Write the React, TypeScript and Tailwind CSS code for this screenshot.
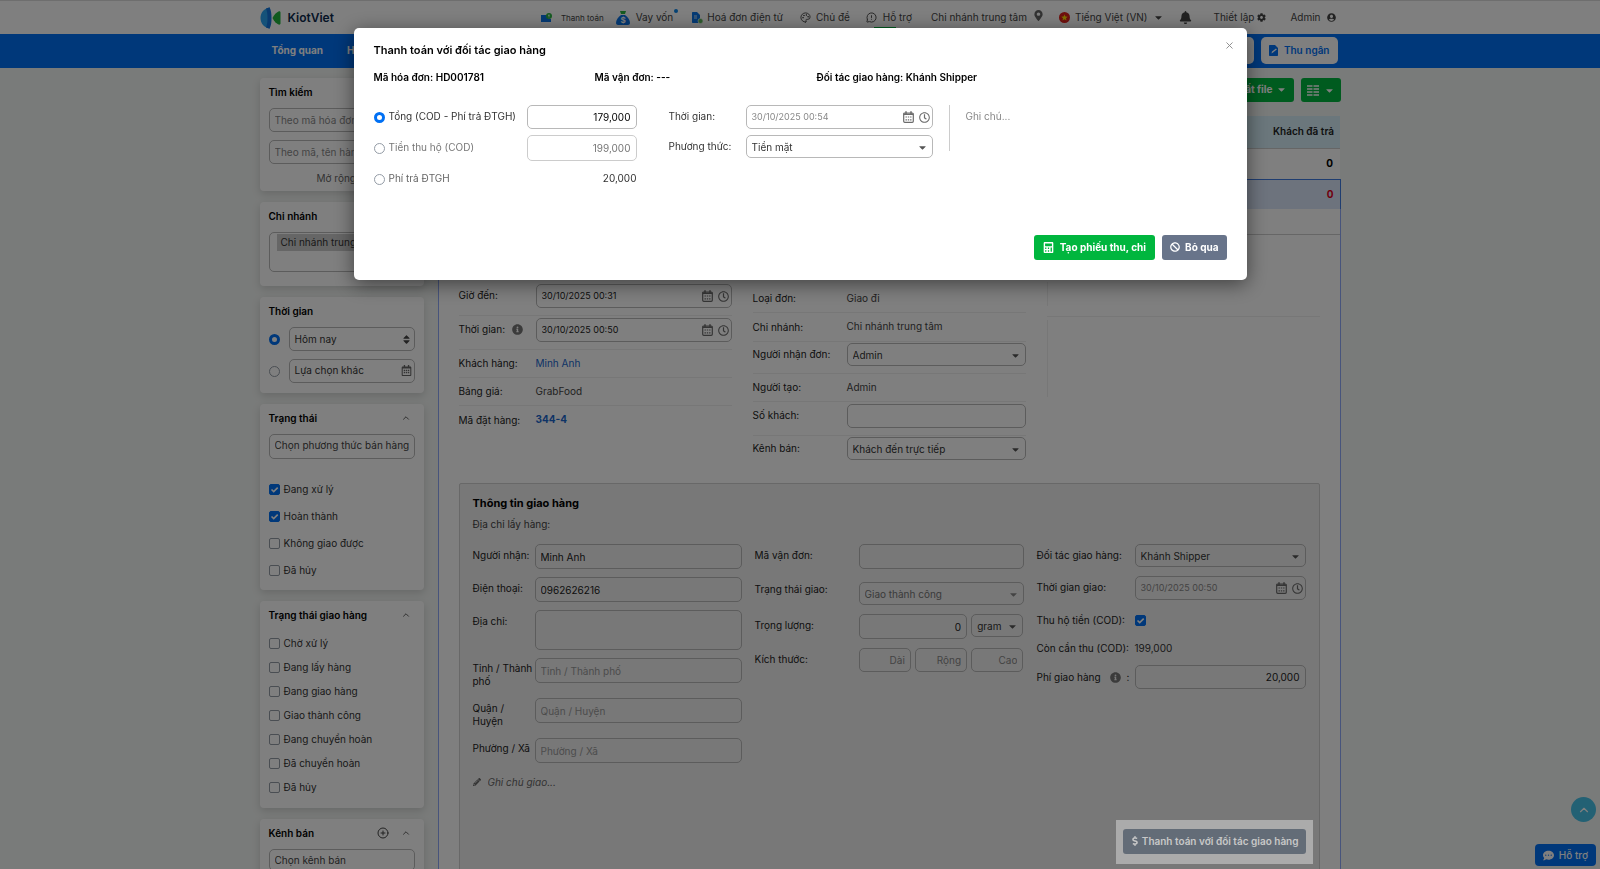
import { ReactNode, useState } from "react";
import {
  FaBan,
  FaBell,
  FaCalculator,
  FaCaretDown,
  FaCog,
  FaCommentDots,
  FaDollarSign,
  FaInfoCircle,
  FaMapMarkerAlt,
  FaPencilAlt,
  FaRegCalendarAlt,
  FaRegClock,
  FaSort,
  FaUserCircle,
} from "react-icons/fa";
import { ChevronUp, CirclePlus, MessageCircleWarning, Palette, X } from "lucide-react";

const box = "rounded-[5px] border border-[#b8b8b8] bg-transparent outline-none";

function Radio({ id, name, checked, onChange }: { id: string; name: string; checked: boolean; onChange: () => void }) {
  return (
    <input id={id} type="radio" name={name} checked={checked} onChange={onChange}
      className="size-[11px] shrink-0 appearance-none rounded-full border border-[#949ca6] bg-white checked:border-[3px] checked:border-[#0070f4]" />
  );
}

function Check({ id, defaultChecked }: { id: string; defaultChecked?: boolean }) {
  return (
    <span className="relative flex size-[11px] shrink-0">
      <input id={id} type="checkbox" defaultChecked={defaultChecked}
        className="peer size-[11px] appearance-none rounded-[2px] border border-[#949ca6] checked:border-[#0070f4] checked:bg-[#0070f4]" />
      <svg viewBox="0 0 11 11" className="pointer-events-none absolute inset-0 hidden size-[11px] peer-checked:block" fill="none" stroke="white" strokeWidth="1.6">
        <path d="M2.5 5.5 4.7 7.6 8.7 3.6" />
      </svg>
    </span>
  );
}

function Calendar() {
  return (
    <svg viewBox="0 0 11 12" className="h-3 w-[11px] shrink-0 text-[#6b6b6b]" fill="none" stroke="currentColor">
      <rect x=".7" y="2" width="9.6" height="9.3" rx="1" strokeWidth="1.2" />
      <path d="M3 .3v2.4M8 .3v2.4M.7 3.3h9.6" strokeWidth="1.5" />
      <path d="M2.5 6h6M2.5 8.8h6" strokeWidth="1.2" strokeDasharray="1.4 .9" />
    </svg>
  );
}

function Select({ id, value, className = "", disabled }: { id: string; value: string; className?: string; disabled?: boolean }) {
  return (
    <span className={"relative flex h-[23px] min-w-0 " + className}>
      <select id={id} disabled={disabled}
        className={"h-[23px] w-full appearance-none px-[5px] pt-px text-[10px] " + box + (disabled ? " text-[#777]" : " text-[#333]")}>
        <option>{value}</option>
      </select>
      <FaCaretDown className={"pointer-events-none absolute right-[5px] top-[7px] size-[11px] " + (disabled ? "text-[#888]" : "text-[#555]")} />
    </span>
  );
}

function DateField({ id, value, muted }: { id: string; value: string; muted?: boolean }) {
  return (
    <span className={"flex h-6 min-w-0 flex-1 items-center gap-[5px] pl-[5px] pr-[2px] " + box}>
      <input id={id} defaultValue={value} disabled={muted}
        className={"min-w-0 flex-1 bg-transparent text-[9px] outline-none " + (muted ? "text-[#888]" : "text-[#222]")} />
      <Calendar />
      <FaRegClock className="size-[11px] text-[#6b6b6b]" />
    </span>
  );
}

function Card({ title, icons, className = "", children }: { title: string; icons?: ReactNode; className?: string; children: ReactNode }) {
  return (
    <section className={"rounded-[4px] bg-white px-[9px] pt-[6px] shadow-[0_3px_8px_rgba(0,0,0,0.15)] " + className}>
      <div className="flex items-center justify-between pb-px pr-1">
        <h3 className="text-[10px] font-semibold leading-4 text-black">{title}</h3>
        <span className="flex items-center gap-3 text-[#444]">{icons}</span>
      </div>
      {children}
    </section>
  );
}

function CheckRow({ id, label, checked }: { id: string; label: string; checked?: boolean }) {
  return (
    <div className="flex items-center gap-1">
      <Check id={id} defaultChecked={checked} />
      <label htmlFor={id} className="leading-4">{label}</label>
    </div>
  );
}

function Header() {
  return (
    <header className="border-t border-[#ddd] bg-white text-[#444]">
      <div className="mx-auto flex h-[33px] w-full max-w-[1081px] items-center justify-between pr-[5px]">
        <a href="#" className="flex items-center gap-[7px]">
          <svg viewBox="0 0 21 22" className="h-[22px] w-[21px]">
            <path d="M10 0.500C4 1 0.500 6 0.500 11S4 21 10 21.500C8 16 8 6 10 .5Z" fill="#2ba4f2" />
            <path d="M6 1.500C8 .7 9 .5 9.600 .5c1.600 3 1.900 6.500 1.900 10.500s-.3 7.500-1.900 10.500c-.6 0-2-.2-3.600-1C8 16 8 6 6 1.500Z" fill="#1475dd" />
            <path d="M12.500 11c1.500-3.500 4-5.500 6-6.500 1-.4 2 0 2 1v11c0 1-1 1.400-2 1-2-1-4.500-3-6-6.500Z" fill="#20b53c" />
          </svg>
          <span className="text-[12px] font-semibold text-[#0d2a4d]">KiotViet</span>
        </a>
        <nav className="flex items-center text-[10px]">
          <a href="#" className="mr-3 flex items-center gap-[9px] text-[8px]">
            <svg viewBox="0 0 11 10" className="h-[10px] w-[11px]">
              <path d="M0 2h7v4h3v3H0Z" fill="#0a74e8" />
              <circle cx="8" cy="3" r="3" fill="#2cb742" />
              <path d="M8 1.4v3M7 2.4h1.6" stroke="#fff" strokeWidth=".7" />
            </svg>
            Thanh toán
          </a>
          <a href="#" className="relative mr-[19px] flex items-center gap-[6px]">
            <svg viewBox="0 0 14 15" className="h-[15px] w-[14px]">
              <path d="M4 1h6L9 4H5Z" fill="#2cb742" />
              <path d="M5 5h4c3 2 5 5 5 8 0 1-1 2-2 2H2c-1 0-2-1-2-2 0-3 2-6 5-8Z" fill="#0a74e8" />
              <text x="7" y="13" fontSize="8" fontWeight="700" textAnchor="middle" fill="#fff">$</text>
            </svg>
            Vay vốn
            <span className="absolute -right-[5px] -top-[1px] size-1 rounded-full bg-[#0a84e8]" />
          </a>
          <a href="#" className="mr-[17px] flex items-center gap-1">
            <svg viewBox="0 0 11 12" className="h-3 w-[11px]">
              <path d="M0 1c0-.6.4-1 1-1h4l3 3v7c0 .6-.4 1-1 1H1c-.6 0-1-.4-1-1Z" fill="#0a74e8" />
              <path d="M2 4h3M2 6h3" stroke="#fff" strokeWidth=".8" />
              <circle cx="8.5" cy="9" r="2.5" fill="#5cb85c" stroke="#fff" strokeWidth=".6" />
            </svg>
            Hoá đơn điện tử
          </a>
          <a href="#" className="mr-[16px] flex items-center gap-[5px]"><Palette size={11} />Chủ đề</a>
          <a href="#" className="relative mr-[19px] flex h-[33px] items-center gap-[6px]">
            <MessageCircleWarning size={11} />Hỗ trợ
            <span className="absolute bottom-[6px] left-2 h-px w-[22px] bg-[#00b63e]" />
          </a>
          <a href="#" className="mr-[15px] flex items-center gap-[6px]">Chi nhánh trung tâm <FaMapMarkerAlt size={11} className="mb-1 text-[#666]" /></a>
          <button className="mr-[15px] flex items-center gap-[5px]">
            <svg viewBox="0 0 12 12" className="size-[11px]">
              <circle cx="6" cy="6" r="6" fill="#e0201b" />
              <path d="m6 2.6 1 2.3 2.5.2-1.9 1.6.6 2.5L6 7.9 3.8 9.2l.6-2.5-1.900-1.600L5 4.900Z" fill="#ffde00" />
            </svg>
            Tiếng Việt (VN)
            <FaCaretDown size={11} />
          </button>
          <button aria-label="Thông báo" className="mr-[22px]"><FaBell size={13} /></button>
          <a href="#" className="mr-[24px] flex items-center gap-[3px]">Thiết lập <FaCog size={9} /></a>
          <a href="#" className="flex items-center gap-[6px]">Admin <FaUserCircle size={9} /></a>
        </nav>
      </div>
      <div className="bg-[#0070f4]">
        <div className="mx-auto flex h-[34px] w-full max-w-[1081px] items-center justify-between pb-px pl-3 pr-[3px] text-[10px] font-bold text-white">
          <nav className="flex gap-6">
            <a href="#">Tổng quan</a>
            <a href="#">Hàng</a>
          </nav>
          <div className="flex gap-[7px] font-semibold text-[#0070f4]">
            <button className="h-[27px] w-[75px] rounded-[5px] bg-white" aria-label="Bán hàng" />
            <button className="flex h-[27px] items-center gap-[6px] rounded-[5px] bg-white px-2">
              <svg viewBox="0 0 9 11" className="h-[11px] w-[9px]">
                <path d="M0 1c0-.6.4-1 1-1h5l3 3v7c0 .6-.4 1-1 1H1c-.6 0-1-.4-1-1Z" fill="#0070f4" />
                <path d="M2.5 8.5 3 6.5l4-3 .8 1-3.8 3Z" fill="#fff" />
              </svg>
              Thu ngân
            </button>
          </div>
        </div>
      </div>
    </header>
  );
}

function Sidebar() {
  const [time, setTime] = useState("today");
  const statuses = ["Chờ xử lý", "Đang lấy hàng", "Đang giao hàng", "Giao thành công", "Đang chuyển hoàn", "Đã chuyển hoàn", "Đã hủy"];
  return (
    <aside className="flex w-[164px] shrink-0 flex-col gap-[11px] text-[10px] text-[#333]">
      <Card title="Tìm kiếm" className="pb-[5px]">
        <input aria-label="Mã hóa đơn" placeholder="Theo mã hóa đơn" className={"mt-[7px] h-6 w-full px-[5px] placeholder:text-[#888] " + box} />
        <input aria-label="Mã, tên hàng" placeholder="Theo mã, tên hàng" className={"mt-2 h-6 w-full px-[5px] placeholder:text-[#888] " + box} />
        <button className="mt-[6px] block w-full pl-[48px] text-left leading-4 text-[#666]">Mở rộng</button>
      </Card>
      <Card title="Chi nhánh" className="pb-[14px]">
        <div className={"mt-[7px] h-10 pl-[7px] pr-1 pt-px " + box}>
          <span className="block truncate bg-[#ccc] px-1 leading-[17px]">Chi nhánh trung tâm</span>
        </div>
      </Card>
      <Card title="Thời gian" className="pb-[10px]">
        <div className="mt-[7px] flex items-center gap-[9px]">
          <Radio id="t-today" name="time" checked={time === "today"} onChange={() => setTime("today")} />
          <label htmlFor="t-today" className={"flex h-6 flex-1 items-center justify-between pl-[5px] pr-[2px] " + box}>Hôm nay <FaSort size={11} className="text-[#444]" /></label>
        </div>
        <div className="mt-2 flex items-center gap-[9px]">
          <Radio id="t-other" name="time" checked={time === "other"} onChange={() => setTime("other")} />
          <label htmlFor="t-other" className={"flex h-6 flex-1 items-center justify-between pb-px pl-[5px] pr-[2px] " + box}>Lựa chọn khác <FaRegCalendarAlt size={11} className="text-[#666]" /></label>
        </div>
      </Card>
      <Card title="Trạng thái" icons={<ChevronUp size={10} />} className="pb-3">
        <input aria-label="Phương thức bán hàng" placeholder="Chọn phương thức bán hàng" className={"mt-[7px] h-[25px] w-full px-[5px] pb-[3px] placeholder:text-[#444] " + box} />
        <div className="mt-[22px] flex flex-col gap-[11px]">
          <CheckRow id="s1" label="Đang xử lý" checked />
          <CheckRow id="s2" label="Hoàn thành" checked />
          <CheckRow id="s3" label="Không giao được" />
          <CheckRow id="s4" label="Đã hủy" />
        </div>
      </Card>
      <Card title="Trạng thái giao hàng" icons={<ChevronUp size={10} />} className="pb-[13px]">
        <div className="mt-[11px] flex flex-col gap-2">
          {statuses.map((s, i) => <CheckRow key={s} id={"g" + i} label={s} />)}
        </div>
      </Card>
      <Card title="Kênh bán" icons={<><CirclePlus size={12} /><ChevronUp size={10} /></>} className="pb-4">
        <input aria-label="Kênh bán" placeholder="Chọn kênh bán" className={"mt-[7px] h-[22px] w-full px-[5px] placeholder:text-[#444] " + box} />
      </Card>
    </aside>
  );
}

function OrderInfo() {
  const dateRow = "flex h-[34px] items-start border-b border-[#eee] pt-[2px]";
  const textRow = "flex h-7 items-center border-b border-[#eee] pb-px";
  const left = "w-[77px] shrink-0 leading-[22px]";
  const mid = "w-[94px] shrink-0 leading-[22px]";
  return (
    <div className="grid grid-cols-3 gap-[21px] text-[10px] text-[#222]">
      <div>
        <div className={dateRow}>
          <label htmlFor="arrive" className={left}>Giờ đến:</label>
          <DateField id="arrive" value="30/10/2025 00:31" />
        </div>
        <div className={dateRow}>
          <label htmlFor="sold" className={left + " flex items-center gap-[7px]"}>Thời gian: <FaInfoCircle size={11} className="text-[#777]" /></label>
          <DateField id="sold" value="30/10/2025 00:50" />
        </div>
        <div className={textRow}><span className={left}>Khách hàng:</span><a href="#" className="text-[#1a66cc]">Minh Anh</a></div>
        <div className={textRow}><span className={left}>Bảng giá:</span><span className="text-[#444]">GrabFood</span></div>
        <div className="flex h-7 items-center pb-px"><span className={left}>Mã đặt hàng:</span><a href="#" className="font-bold text-[#1a66cc]">344-4</a></div>
      </div>
      <div className="pt-[3px]">
        <div className={textRow}><span className={mid}>Loại đơn:</span><span className="text-[#444]">Giao đi</span></div>
        <div className="flex h-[29px] items-center border-b border-[#eee] pb-px"><span className={mid}>Chi nhánh:</span><span className="text-[#444]">Chi nhánh trung tâm</span></div>
        <div className="flex h-8 items-start border-b border-[#eee] pt-px">
          <label htmlFor="taker" className={mid}>Người nhận đơn:</label>
          <Select id="taker" value="Admin" className="flex-1" />
        </div>
        <div className={textRow}><span className={mid}>Người tạo:</span><span className="text-[#444]">Admin</span></div>
        <div className={dateRow}>
          <label htmlFor="guests" className={mid}>Số khách:</label>
          <input id="guests" className={"h-6 min-w-0 flex-1 px-[5px] " + box} />
        </div>
        <div className="flex h-8 items-start pt-px">
          <label htmlFor="channel" className={mid}>Kênh bán:</label>
          <Select id="channel" value="Khách đến trực tiếp" className="flex-1" />
        </div>
      </div>
      <div>
        <div className="h-6 border-l border-[#eee]" />
        <div className="mt-[10px] border-t border-[#eee] pt-[3px]">
          <div className="h-[77px] border-l border-[#eee]" />
        </div>
      </div>
    </div>
  );
}

function DeliveryPanel() {
  const label = "shrink-0 leading-[22px]";
  const field = "h-[25px] min-w-0 flex-1 px-[5px] placeholder:text-[#999] " + box;
  return (
    <section className="mt-[15px] flex-1 rounded-t-[2px] border border-[#d0d0d0] bg-[#f0f0f0] px-[13px] pt-[10px] text-[10px] text-[#222]">
      <h3 className="text-[11px] font-bold leading-[18px] text-black">Thông tin giao hàng</h3>
      <p className="mt-[3px] leading-[18px] text-[#444]">Địa chỉ lấy hàng:</p>
      <div className="mt-[11px] grid grid-cols-3 gap-[13px]">
        <div className="flex flex-col gap-2">
          <div className="flex"><label htmlFor="name" className={"w-[62px] " + label}>Người nhận:</label><input id="name" defaultValue="Minh Anh" className={field} /></div>
          <div className="flex"><label htmlFor="phone" className={"w-[62px] " + label}>Điện thoại:</label><input id="phone" defaultValue="0962626216" className={field} /></div>
          <div className="flex"><label htmlFor="addr" className={"w-[62px] " + label}>Địa chỉ:</label><textarea id="addr" className={"h-10 min-w-0 flex-1 resize-none " + box} /></div>
          <div className="flex flex-col gap-[10px]">
            <div className="flex items-start"><label htmlFor="city" className="w-[62px] shrink-0 pt-1 leading-[13px]">Tỉnh / Thành phố</label><input id="city" placeholder="Tỉnh / Thành phố" className={field} /></div>
            <div className="flex items-start"><label htmlFor="district" className="w-[62px] shrink-0 pr-4 pt-1 leading-[13px]">Quận / Huyện</label><input id="district" placeholder="Quận / Huyện" className={field} /></div>
            <div className="flex items-start"><label htmlFor="ward" className="w-[62px] shrink-0 pt-1 leading-[13px]">Phường / Xã</label><input id="ward" placeholder="Phường / Xã" className={field} /></div>
          </div>
          <div className="flex items-center gap-[7px] text-[#666]">
            <FaPencilAlt size={8} />
            <input aria-label="Ghi chú giao" placeholder="Ghi chú giao..." className="h-[22px] flex-1 bg-transparent italic outline-none placeholder:text-[#666]" />
          </div>
        </div>
        <div className="flex flex-col gap-[9px]">
          <div className="flex"><label htmlFor="code" className={"w-[104px] " + label}>Mã vận đơn:</label><input id="code" className={field} /></div>
          <div className="flex"><label htmlFor="state" className={"w-[104px] " + label}>Trạng thái giao:</label><Select id="state" value="Giao thành công" disabled className="mt-1 flex-1" /></div>
          <div className="flex">
            <label htmlFor="weight" className={"w-[104px] " + label}>Trọng lượng:</label>
            <span className="grid flex-1 grid-cols-3 gap-1">
              <input id="weight" defaultValue="0" className={"col-span-2 h-[25px] min-w-0 px-[5px] text-right " + box} />
              <Select id="unit" value="gram" />
            </span>
          </div>
          <div className="flex">
            <label htmlFor="len" className={"w-[104px] " + label}>Kích thước:</label>
            <span className="grid flex-1 grid-cols-3 gap-1">
              {["Dài", "Rộng", "Cao"].map((p, i) => (
                <input key={p} id={i === 0 ? "len" : undefined} aria-label={p} placeholder={p} className={"h-6 min-w-0 px-[5px] text-right placeholder:text-[#888] " + box} />
              ))}
            </span>
          </div>
        </div>
        <div className="flex flex-col gap-[9px]">
          <div className="flex"><label htmlFor="partner" className={"w-[98px] " + label}>Đối tác giao hàng:</label><Select id="partner" value="Khánh Shipper" className="flex-1" /></div>
          <div className="flex"><label htmlFor="shiptime" className={"w-[98px] " + label}>Thời gian giao:</label><DateField id="shiptime" value="30/10/2025 00:50" muted /></div>
          <div className="flex items-center"><label htmlFor="cod" className={"w-[98px] " + label}>Thu hộ tiền (COD):</label><Check id="cod" defaultChecked /></div>
          <div className="flex leading-4"><span className="w-[98px] shrink-0">Còn cần thu (COD):</span><span className="text-[#333]">199,000</span></div>
          <div className="flex">
            <label htmlFor="fee" className={"flex w-[98px] items-center " + label}>Phí giao hàng <FaInfoCircle size={11} className="ml-[9px] mr-[6px] text-[#777]" />:</label>
            <input id="fee" defaultValue="20,000" className={"h-6 min-w-0 flex-1 px-[5px] text-right " + box} />
          </div>
        </div>
      </div>
      <div className="-mr-[7px] mt-[27px] flex justify-end">
        <div className="relative z-50 bg-[#ababab] px-[7px] pb-[10px] pt-[9px]">
          <button className="flex h-[25px] items-center gap-[2px] rounded-[3px] bg-[#636c77] px-[7px] pb-px text-[10px] font-semibold text-[#c8c8c8]">
            <FaDollarSign size={10} /> Thanh toán với đối tác giao hàng
          </button>
        </div>
      </div>
    </section>
  );
}

function Invoices() {
  return (
    <main className="flex min-w-0 flex-1 flex-col">
      <div className="flex justify-end gap-[7px] text-[10px] font-bold text-white">
        <button className="flex h-6 items-center gap-[3px] rounded-[3px] bg-[#00b63e] px-[7px] pb-px">Xuất file <FaCaretDown size={11} /></button>
        <button aria-label="Cột hiển thị" className="flex h-6 items-center gap-[5px] rounded-[3px] bg-[#00b63e] px-[6px]">
          <svg viewBox="0 0 12 11" className="h-[11px] w-3" stroke="currentColor" strokeWidth="1.5">
            <path d="M0 1h5.500M6.500 1H12M0 4h5.500M6.500 4H12M0 7h5.500M6.500 7H12M0 10h5.500M6.500 10H12" />
          </svg>
          <FaCaretDown size={11} />
        </button>
      </div>
      <table className="mt-[14px] w-full text-right text-[10px] font-bold">
        <thead>
          <tr className="h-8 border-b border-[#ccc] bg-[#d6eff8]"><th className="pr-[6px] font-semibold text-[#222]">Khách đã trả</th></tr>
        </thead>
        <tbody>
          <tr className="h-[31px] bg-white"><td className="pr-[7px]">0</td></tr>
          <tr className="h-[30px] border border-b-0 border-[#3f7ae0] bg-[#dbe7fb]"><td className="pr-[6px] text-[#e0001b]">0</td></tr>
        </tbody>
      </table>
      <div className="flex flex-1 flex-col border-x border-[#8fa8f8] bg-white">
        <div className="h-[26px] border-b border-[#ccc]" />
        <div className="flex flex-1 flex-col px-5 pt-[47px]">
          <OrderInfo />
          <DeliveryPanel />
        </div>
      </div>
    </main>
  );
}

function PaymentModal() {
  const [kind, setKind] = useState("total");
  return (
    <div className="fixed inset-0 z-40 flex items-start justify-center bg-black/50 pt-7">
      <div role="dialog" aria-labelledby="modal-title"
        className="w-full max-w-[893px] rounded-[5px] bg-white px-5 pb-5 pt-[13px] text-[10px] text-[#333] shadow-[0_4px_20px_rgba(0,0,0,0.5)]">
        <div className="flex items-start justify-between">
          <h2 id="modal-title" className="text-[11px] font-semibold leading-[18px] text-black">Thanh toán với đối tác giao hàng</h2>
          <button aria-label="Đóng" className="-mr-2 -mt-px text-[#888]"><X size={11} /></button>
        </div>
        <div className="mt-[9px] grid grid-cols-[221px_222px_1fr] font-semibold leading-[18px] text-black">
          <span>Mã hóa đơn: HD001781</span>
          <span>Mã vận đơn: ---</span>
          <span>Đối tác giao hàng: Khánh Shipper</span>
        </div>
        <div className="mt-[19px] flex">
          <div className="flex w-[263px] flex-col gap-[6px]">
            <div className="flex h-6 items-center">
              <Radio id="k1" name="kind" checked={kind === "total"} onChange={() => setKind("total")} />
              <label htmlFor="k1" className="ml-1 flex-1 pb-px">Tổng (COD - Phí trả ĐTGH)</label>
              <input aria-label="Tổng" defaultValue="179,000" className={"h-6 w-[110px] px-[5px] text-right text-black " + box} />
            </div>
            <div className="flex h-[26px] items-center text-[#777]">
              <Radio id="k2" name="kind" checked={kind === "cod"} onChange={() => setKind("cod")} />
              <label htmlFor="k2" className="ml-1 flex-1 pb-px">Tiền thu hộ (COD)</label>
              <input aria-label="Tiền thu hộ" defaultValue="199,000" className="h-[26px] w-[110px] rounded-[5px] border border-[#ccc] px-[5px] text-right outline-none" />
            </div>
            <div className="flex h-6 items-center text-[#666]">
              <Radio id="k3" name="kind" checked={kind === "fee"} onChange={() => setKind("fee")} />
              <label htmlFor="k3" className="ml-1 flex-1 pb-px">Phí trả ĐTGH</label>
              <span className="pb-px text-[#333]">20,000</span>
            </div>
          </div>
          <div className="ml-[32px] flex w-[264px] flex-col gap-[6px]">
            <div className="flex">
              <label htmlFor="mtime" className="w-[77px] leading-[22px]">Thời gian:</label>
              <DateField id="mtime" value="30/10/2025 00:54" muted />
            </div>
            <div className="flex">
              <label htmlFor="method" className="w-[77px] leading-[23px]">Phương thức:</label>
              <Select id="method" value="Tiền mặt" className="flex-1" />
            </div>
          </div>
          <textarea aria-label="Ghi chú" placeholder="Ghi chú..."
            className="ml-4 h-[46px] flex-1 resize-none border-l border-[#ccc] pl-4 pt-[4px] outline-none placeholder:text-[#888]" />
        </div>
        <div className="mt-[44px] flex justify-end gap-[7px] font-bold text-white">
          <button className="flex h-[25px] items-center gap-[6px] rounded-[3px] bg-[#00b63e] px-[9px] pb-px"><FaCalculator size={11} />Tạo phiếu thu, chi</button>
          <button className="flex h-[25px] items-center gap-[5px] rounded-[3px] bg-[#68748a] px-2 pb-px"><FaBan size={10} />Bỏ qua</button>
        </div>
      </div>
    </div>
  );
}

export default function App() {
  return (
    <div className="flex h-screen flex-col overflow-hidden bg-[#f3f6f4] font-['Inter','Liberation_Sans',sans-serif]">
      <Header />
      <div className="mx-auto flex w-full max-w-[1081px] flex-1 gap-[14px] pt-[10px]">
        <Sidebar />
        <Invoices />
      </div>
      <button aria-label="Lên đầu trang" className="fixed bottom-[47px] right-1 flex size-[25px] items-center justify-center rounded-full bg-[#46c2e8] text-white"><ChevronUp size={14} /></button>
      <button className="fixed bottom-[3px] right-1 flex h-[22px] items-center gap-[5px] rounded-[4px] bg-[#0070f4] px-2 text-[10px] font-medium text-white"><FaCommentDots size={11} />Hỗ trợ</button>
      <PaymentModal />
    </div>
  );
}
